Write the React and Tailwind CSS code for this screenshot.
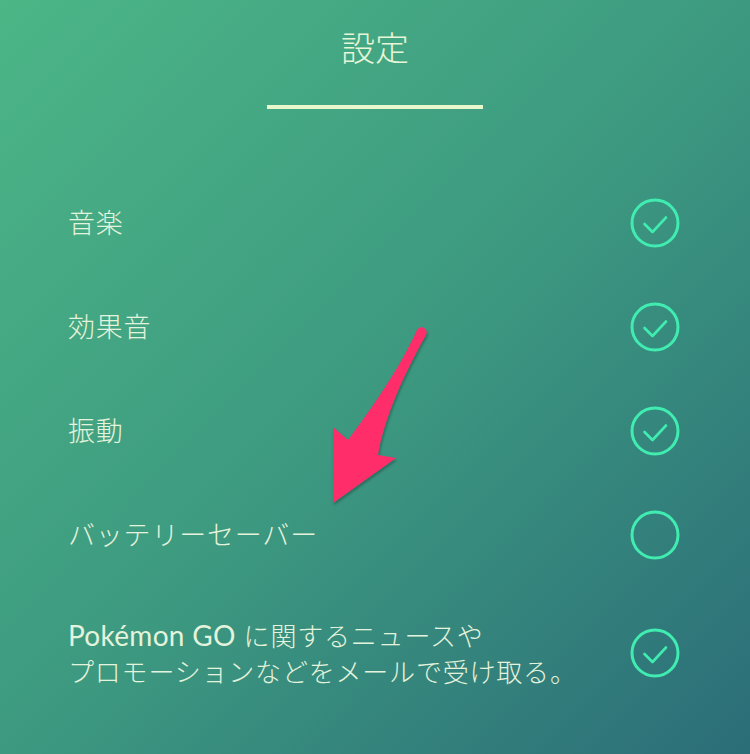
import React from 'react';

const jp = '"Lato", "Noto Sans CJK JP", sans-serif';

const settings = [
  { label: '音楽', on: true },
  { label: '効果音', on: true },
  { label: '振動', on: true },
  { label: 'バッテリーセーバー', on: false },
];

const Toggle = ({ on }) => (
  <svg width="52" height="52" viewBox="0 0 52 52" className="shrink-0">
    <circle cx="26" cy="26" r="23" fill="none" stroke="#40ecb0" strokeWidth="3" />
    {on && (
      <path
        d="M15.5 27 L23.5 35 L37 20.5"
        fill="none"
        stroke="#40ecb0"
        strokeWidth="2.6"
        strokeLinecap="round"
        strokeLinejoin="round"
      />
    )}
  </svg>
);

const Arrow = () => (
  <svg
    className="absolute left-0 top-0 pointer-events-none"
    width="750"
    height="754"
    viewBox="0 0 750 754"
  >
    <defs>
      <filter id="sh" x="-20%" y="-20%" width="140%" height="140%">
        <feDropShadow dx="1" dy="2" stdDeviation="1.5" floodColor="#000" floodOpacity="0.3" />
      </filter>
    </defs>
    <path
      d="M417 330 C400 368 372 408 348 440 L333 427 L333 503 L396 458 L378 455 C384 418 404 374 426 335 A4.8 4.8 0 0 0 417 330 Z"
      fill="#ff2d6b"
      filter="url(#sh)"
    />
  </svg>
);

export default function App() {
  return (
    <div
      className="relative w-[750px] h-[754px] overflow-hidden bg-gradient-to-br from-[#4cb687] via-[#3d9a80] to-[#2c6d78]"
      style={{ fontFamily: jp }}
    >
      <div className="flex flex-col items-center pt-[22px]">
        <h1 className="text-[34px] leading-[52px] font-light text-[#e6f6d6]">設定</h1>
        <div className="mt-[31px] w-[216px] h-[4px] bg-[#e8f8cc]" />
      </div>

      <div className="mt-[62px] pl-[68px] pr-[69px]">
        {settings.map((s) => (
          <div key={s.label} className="flex items-center justify-between h-[104px]">
            <span className="text-[27px] font-light text-[#e4f3dc] tracking-[0.8px]">{s.label}</span>
            <Toggle on={s.on} />
          </div>
        ))}
        <div className="flex items-center justify-between h-[132px]">
          <p className="text-[26px] leading-[36px] font-light text-[#e4f3dc] tracking-[0.8px]">
            <span className="text-[28px] font-normal tracking-[0.3px]">Pokémon GO</span> に関するニュースや
            <br />
            プロモーションなどをメールで受け取る。
          </p>
          <Toggle on />
        </div>
      </div>

      <Arrow />
    </div>
  );
}
